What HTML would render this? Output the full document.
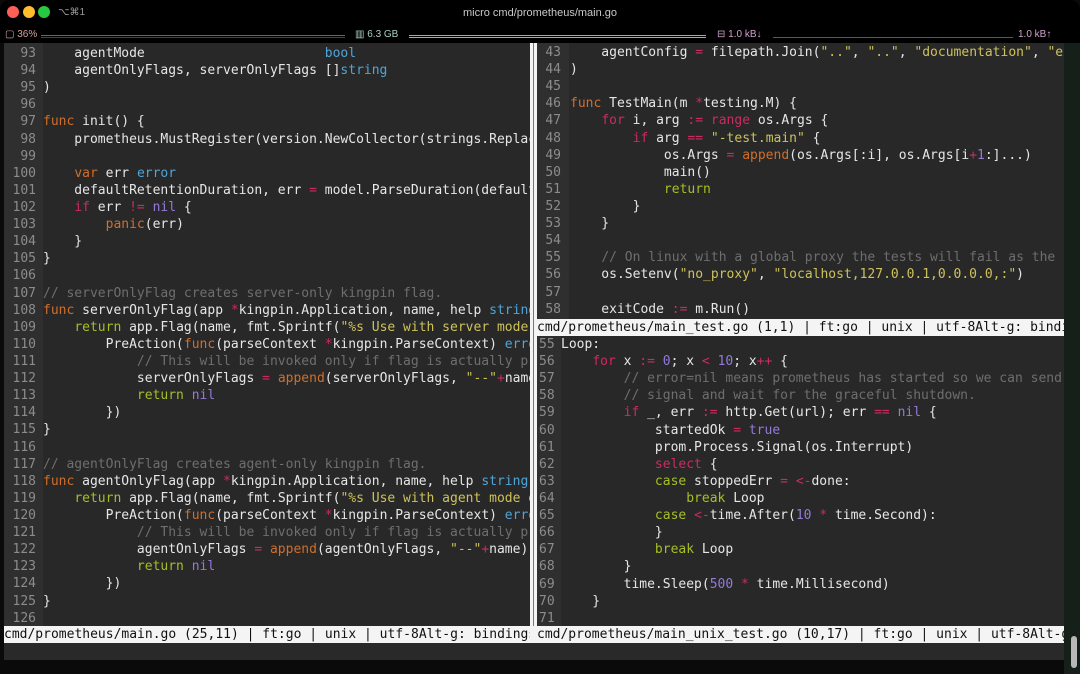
<!DOCTYPE html>
<html><head><meta charset="utf-8"><style>
*{margin:0;padding:0;box-sizing:border-box}
html,body{width:1080px;height:674px;overflow:hidden;background:#0a0a0a}
body{position:relative;font-family:"DejaVu Sans Mono","Liberation Mono",monospace;font-size:13px;color:#e6e6e6}
.abs{position:absolute}
.pane{position:absolute;background:#282828;overflow:hidden}
.gut{position:absolute;top:0;bottom:0;left:0;background:#2f2f2f}
.l{height:17.12px;line-height:17.12px;white-space:pre;position:relative}
.n{display:inline-block;color:#8c8c8c;text-align:right}
.k{color:#cf6f2c}.r{color:#cc2b5e}.g{color:#a5bf25}.p{color:#9479d8}.s{color:#cdc25a}.t{color:#4fa5d8}.c{color:#6e6e6e}
.st{position:absolute;background:#f4f4f4;color:#111;height:17px;line-height:17px;white-space:pre;overflow:hidden}
.top{font-family:"Liberation Sans",sans-serif;font-size:10px}
</style></head><body>
<div class="abs" style="left:0;top:0;width:1080px;height:43px;background:#000;border-radius:10px 10px 0 0"></div>
<div class="abs" style="left:7px;top:6px;width:12px;height:12px;border-radius:6px;background:#fe5f57"></div>
<div class="abs" style="left:23px;top:6px;width:12px;height:12px;border-radius:6px;background:#febc2e"></div>
<div class="abs" style="left:38px;top:6px;width:12px;height:12px;border-radius:6px;background:#28c840"></div>
<div class="abs top" style="left:58px;top:7px;color:#9a9a9a">⌥⌘1</div>
<div class="abs top" style="left:0;width:1080px;top:7px;text-align:center;color:#c8c8c8;font-size:11px">micro cmd/prometheus/main.go</div>
<div class="abs top" style="left:5px;top:29px;color:#d8a0a0">▢ 36%</div>
<div class="abs" style="left:41px;top:35px;width:304px;height:1px;background:#8a5a5a"></div>
<div class="abs" style="left:41px;top:37px;width:304px;height:1px;background:#5a3838"></div>
<div class="abs top" style="left:355px;top:29px;color:#a8d0c0">▥ 6.3 GB</div>
<div class="abs" style="left:409px;top:35px;width:297px;height:1px;background:#8ab8a8"></div>
<div class="abs" style="left:409px;top:37px;width:297px;height:1px;background:#8ab8a8"></div>
<div class="abs top" style="left:717px;top:29px;color:#d0a0c8">⊟ 1.0 kB↓</div>
<div class="abs" style="left:773px;top:37px;width:240px;height:1px;background:#5a40d0"></div>
<div class="abs top" style="left:1018px;top:29px;color:#d0a0c8">1.0 kB↑</div>

<!-- left pane -->
<div class="pane" style="left:4px;top:43px;width:526px;height:583px">
<div class="gut" style="width:39px"></div>
<div style="position:relative;top:2px">
<div class="l"><span class="n" style="width:39px;padding-right:7px">93</span>    agentMode                       <span class="t">bool</span></div>
<div class="l"><span class="n" style="width:39px;padding-right:7px">94</span>    agentOnlyFlags, serverOnlyFlags []<span class="t">string</span></div>
<div class="l"><span class="n" style="width:39px;padding-right:7px">95</span>)</div>
<div class="l"><span class="n" style="width:39px;padding-right:7px">96</span></div>
<div class="l"><span class="n" style="width:39px;padding-right:7px">97</span><span class="k">func</span> init() {</div>
<div class="l"><span class="n" style="width:39px;padding-right:7px">98</span>    prometheus.MustRegister(version.NewCollector(strings.Replace(</div>
<div class="l"><span class="n" style="width:39px;padding-right:7px">99</span></div>
<div class="l"><span class="n" style="width:39px;padding-right:7px">100</span>    <span class="k">var</span> err <span class="t">error</span></div>
<div class="l"><span class="n" style="width:39px;padding-right:7px">101</span>    defaultRetentionDuration, err <span class="r">=</span> model.ParseDuration(defaultRe</div>
<div class="l"><span class="n" style="width:39px;padding-right:7px">102</span>    <span class="r">if</span> err <span class="r">!=</span> <span class="p">nil</span> {</div>
<div class="l"><span class="n" style="width:39px;padding-right:7px">103</span>        <span class="k">panic</span>(err)</div>
<div class="l"><span class="n" style="width:39px;padding-right:7px">104</span>    }</div>
<div class="l"><span class="n" style="width:39px;padding-right:7px">105</span>}</div>
<div class="l"><span class="n" style="width:39px;padding-right:7px">106</span></div>
<div class="l"><span class="n" style="width:39px;padding-right:7px">107</span><span class="c">// serverOnlyFlag creates server-only kingpin flag.</span></div>
<div class="l"><span class="n" style="width:39px;padding-right:7px">108</span><span class="k">func</span> serverOnlyFlag(app <span class="r">*</span>kingpin.Application, name, help <span class="t">string</span>)</div>
<div class="l"><span class="n" style="width:39px;padding-right:7px">109</span>    <span class="g">return</span> app.Flag(name, fmt.Sprintf(<span class="s">"%s Use with server mode only."</span></div>
<div class="l"><span class="n" style="width:39px;padding-right:7px">110</span>        PreAction(<span class="k">func</span>(parseContext <span class="r">*</span>kingpin.ParseContext) <span class="t">error</span></div>
<div class="l"><span class="n" style="width:39px;padding-right:7px">111</span>            <span class="c">// This will be invoked only if flag is actually provided</span></div>
<div class="l"><span class="n" style="width:39px;padding-right:7px">112</span>            serverOnlyFlags <span class="r">=</span> <span class="k">append</span>(serverOnlyFlags, <span class="s">"--"</span><span class="r">+</span>name)</div>
<div class="l"><span class="n" style="width:39px;padding-right:7px">113</span>            <span class="g">return</span> <span class="p">nil</span></div>
<div class="l"><span class="n" style="width:39px;padding-right:7px">114</span>        })</div>
<div class="l"><span class="n" style="width:39px;padding-right:7px">115</span>}</div>
<div class="l"><span class="n" style="width:39px;padding-right:7px">116</span></div>
<div class="l"><span class="n" style="width:39px;padding-right:7px">117</span><span class="c">// agentOnlyFlag creates agent-only kingpin flag.</span></div>
<div class="l"><span class="n" style="width:39px;padding-right:7px">118</span><span class="k">func</span> agentOnlyFlag(app <span class="r">*</span>kingpin.Application, name, help <span class="t">string</span>)</div>
<div class="l"><span class="n" style="width:39px;padding-right:7px">119</span>    <span class="g">return</span> app.Flag(name, fmt.Sprintf(<span class="s">"%s Use with agent mode only."</span></div>
<div class="l"><span class="n" style="width:39px;padding-right:7px">120</span>        PreAction(<span class="k">func</span>(parseContext <span class="r">*</span>kingpin.ParseContext) <span class="t">error</span></div>
<div class="l"><span class="n" style="width:39px;padding-right:7px">121</span>            <span class="c">// This will be invoked only if flag is actually provided</span></div>
<div class="l"><span class="n" style="width:39px;padding-right:7px">122</span>            agentOnlyFlags <span class="r">=</span> <span class="k">append</span>(agentOnlyFlags, <span class="s">"--"</span><span class="r">+</span>name))</div>
<div class="l"><span class="n" style="width:39px;padding-right:7px">123</span>            <span class="g">return</span> <span class="p">nil</span></div>
<div class="l"><span class="n" style="width:39px;padding-right:7px">124</span>        })</div>
<div class="l"><span class="n" style="width:39px;padding-right:7px">125</span>}</div>
<div class="l"><span class="n" style="width:39px;padding-right:7px">126</span></div>
</div></div>

<!-- divider -->
<div class="abs" style="left:530px;top:43px;width:7px;height:600px;background:#f4f4f4"></div>
<div class="abs" style="left:533px;top:43px;width:1px;height:583px;background:#777"></div>

<!-- right top pane -->
<div class="pane" style="left:537px;top:43px;width:527px;height:276px">
<div class="gut" style="width:32px"></div>
<div style="position:relative;top:1px">
<div class="l"><span class="n" style="width:33px;padding-right:9px">43</span>    agentConfig <span class="r">=</span> filepath.Join(<span class="s">".."</span>, <span class="s">".."</span>, <span class="s">"documentation"</span>, <span class="s">"examples"</span></div>
<div class="l"><span class="n" style="width:33px;padding-right:9px">44</span>)</div>
<div class="l"><span class="n" style="width:33px;padding-right:9px">45</span></div>
<div class="l"><span class="n" style="width:33px;padding-right:9px">46</span><span class="k">func</span> TestMain(m <span class="r">*</span>testing.M) {</div>
<div class="l"><span class="n" style="width:33px;padding-right:9px">47</span>    <span class="r">for</span> i, arg <span class="r">:=</span> <span class="r">range</span> os.Args {</div>
<div class="l"><span class="n" style="width:33px;padding-right:9px">48</span>        <span class="r">if</span> arg <span class="r">==</span> <span class="s">"-test.main"</span> {</div>
<div class="l"><span class="n" style="width:33px;padding-right:9px">49</span>            os.Args <span class="r">=</span> <span class="k">append</span>(os.Args[:i], os.Args[i<span class="r">+</span><span class="p">1</span>:]...)</div>
<div class="l"><span class="n" style="width:33px;padding-right:9px">50</span>            main()</div>
<div class="l"><span class="n" style="width:33px;padding-right:9px">51</span>            <span class="g">return</span></div>
<div class="l"><span class="n" style="width:33px;padding-right:9px">52</span>        }</div>
<div class="l"><span class="n" style="width:33px;padding-right:9px">53</span>    }</div>
<div class="l"><span class="n" style="width:33px;padding-right:9px">54</span></div>
<div class="l"><span class="n" style="width:33px;padding-right:9px">55</span>    <span class="c">// On linux with a global proxy the tests will fail as the</span></div>
<div class="l"><span class="n" style="width:33px;padding-right:9px">56</span>    os.Setenv(<span class="s">"no_proxy"</span>, <span class="s">"localhost,127.0.0.1,0.0.0.0,:"</span>)</div>
<div class="l"><span class="n" style="width:33px;padding-right:9px">57</span></div>
<div class="l"><span class="n" style="width:33px;padding-right:9px">58</span>    exitCode <span class="r">:=</span> m.Run()</div>
</div></div>
<div class="st" style="left:537px;top:319px;width:527px">cmd/prometheus/main_test.go (1,1) | ft:go | unix | utf-8Alt-g: bindings</div>

<!-- right bottom pane -->
<div class="pane" style="left:537px;top:336px;width:527px;height:290px">
<div class="gut" style="width:24px"></div>
<div style="position:relative;top:0px">
<div class="l"><span class="n" style="width:24px;padding-left:2px;text-align:left">55</span>Loop:</div>
<div class="l"><span class="n" style="width:24px;padding-left:2px;text-align:left">56</span>    <span class="r">for</span> x <span class="r">:=</span> <span class="p">0</span>; x <span class="r">&lt;</span> <span class="p">10</span>; x<span class="r">++</span> {</div>
<div class="l"><span class="n" style="width:24px;padding-left:2px;text-align:left">57</span>        <span class="c">// error=nil means prometheus has started so we can send the</span></div>
<div class="l"><span class="n" style="width:24px;padding-left:2px;text-align:left">58</span>        <span class="c">// signal and wait for the graceful shutdown.</span></div>
<div class="l"><span class="n" style="width:24px;padding-left:2px;text-align:left">59</span>        <span class="r">if</span> _, err <span class="r">:=</span> http.Get(url); err <span class="r">==</span> <span class="p">nil</span> {</div>
<div class="l"><span class="n" style="width:24px;padding-left:2px;text-align:left">60</span>            startedOk <span class="r">=</span> <span class="p">true</span></div>
<div class="l"><span class="n" style="width:24px;padding-left:2px;text-align:left">61</span>            prom.Process.Signal(os.Interrupt)</div>
<div class="l"><span class="n" style="width:24px;padding-left:2px;text-align:left">62</span>            <span class="r">select</span> {</div>
<div class="l"><span class="n" style="width:24px;padding-left:2px;text-align:left">63</span>            <span class="g">case</span> stoppedErr <span class="r">=</span> <span class="r">&lt;-</span>done:</div>
<div class="l"><span class="n" style="width:24px;padding-left:2px;text-align:left">64</span>                <span class="g">break</span> Loop</div>
<div class="l"><span class="n" style="width:24px;padding-left:2px;text-align:left">65</span>            <span class="g">case</span> <span class="r">&lt;-</span>time.After(<span class="p">10</span> <span class="r">*</span> time.Second):</div>
<div class="l"><span class="n" style="width:24px;padding-left:2px;text-align:left">66</span>            }</div>
<div class="l"><span class="n" style="width:24px;padding-left:2px;text-align:left">67</span>            <span class="g">break</span> Loop</div>
<div class="l"><span class="n" style="width:24px;padding-left:2px;text-align:left">68</span>        }</div>
<div class="l"><span class="n" style="width:24px;padding-left:2px;text-align:left">69</span>        time.Sleep(<span class="p">500</span> <span class="r">*</span> time.Millisecond)</div>
<div class="l"><span class="n" style="width:24px;padding-left:2px;text-align:left">70</span>    }</div>
<div class="l"><span class="n" style="width:24px;padding-left:2px;text-align:left">71</span></div>
</div></div>

<div class="st" style="left:4px;top:626px;width:526px">cmd/prometheus/main.go (25,11) | ft:go | unix | utf-8Alt-g: bindings</div>
<div class="st" style="left:537px;top:626px;width:527px">cmd/prometheus/main_unix_test.go (10,17) | ft:go | unix | utf-8Alt-g: bindings</div>
<div class="abs" style="left:4px;top:643px;width:1060px;height:17px;background:#292929"></div>
<div class="abs" style="left:1064px;top:43px;width:16px;height:631px;background:#16201b"></div>
<div class="abs" style="left:1071px;top:636px;width:6px;height:32px;border-radius:3px;background:#b8b8b8"></div>
</body></html>
